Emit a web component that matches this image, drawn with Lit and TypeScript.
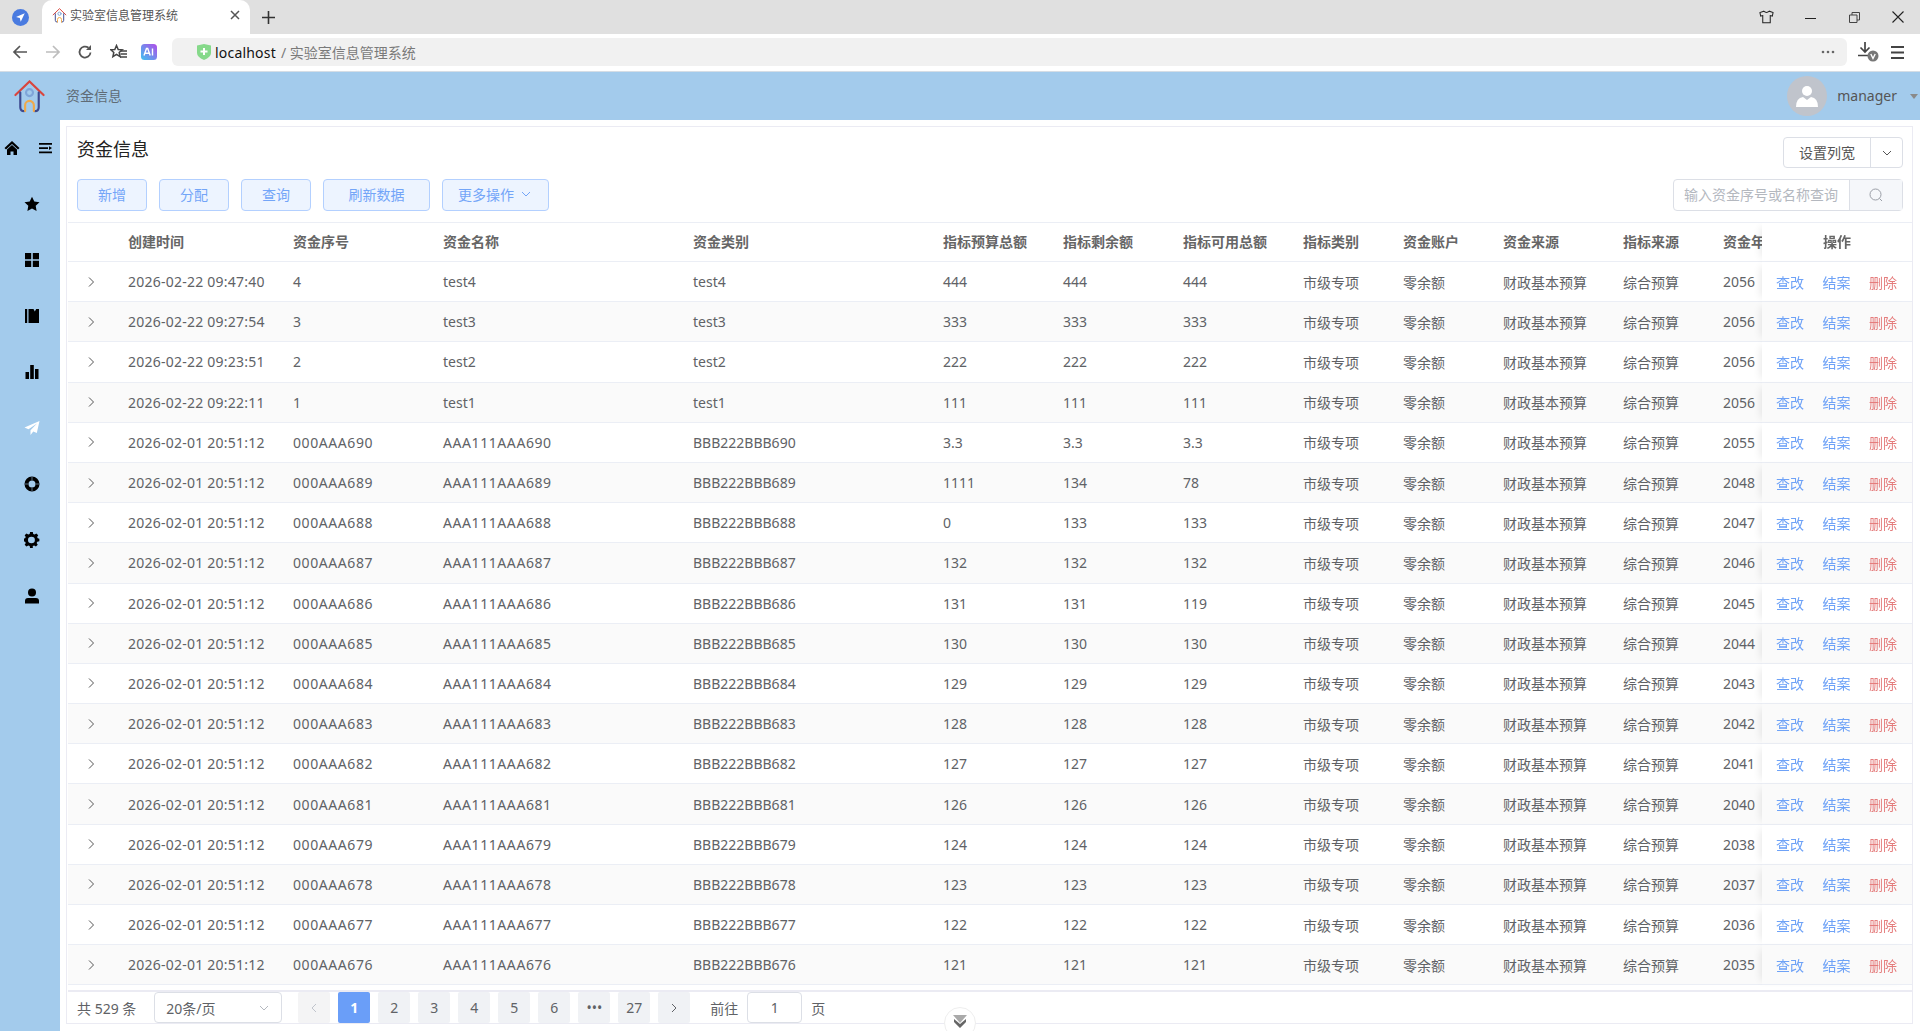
import { LitElement, html, css, svg } from 'lit';
import { customElement } from 'lit/decorators.js';

const FONT = css`"Noto Sans", "Noto Sans CJK SC", sans-serif`;

const logo = (size: number) => html`
  <svg width=${size} height=${size} viewBox="0 0 32 34" fill="none" stroke-linecap="round">
    <path d="M1.5 15.5 16 1.5l14.5 14" stroke="#d9453d" stroke-width="2.2" />
    <circle cx="16" cy="13" r="3.6" stroke="#7fa5d8" stroke-width="2.2" />
    <path d="M6.5 13v15q0 4 4 4M25.5 13v15q0 4-4 4" stroke="#3d4a8f" stroke-width="2.2" />
    <path d="M11.5 32v-6a4.5 4.5 0 0 1 9 0v6" stroke="#f0a94a" stroke-width="2.2" />
  </svg>
`;

@customElement('browser-bar')
class BrowserBar extends LitElement {
  static styles = css`
    :host {
      display: block;
      font-family: ${FONT};
    }
    .tabs {
      height: 34px;
      background: #e0e0e0;
      display: flex;
      align-items: center;
    }
    .pin {
      width: 42px;
      display: flex;
      justify-content: center;
      padding-right: 2px;
      box-sizing: border-box;
    }
    .tab {
      width: 208px;
      height: 34px;
      background: #fff;
      border-radius: 10px 10px 0 0;
      display: flex;
      align-items: center;
      padding: 0 10px 4px;
      box-sizing: border-box;
      gap: 3px;
      font-size: 12px;
      color: #555;
    }
    .tab span {
      flex: 1;
    }
    .plus {
      margin-left: 12px;
    }
    .win {
      margin-left: auto;
      display: flex;
      align-items: center;
    }
    .win span {
      width: 44px;
      display: flex;
      justify-content: center;
    }
    .nav {
      height: 38px;
      background: #fff;
      border-bottom: 1px solid #d5dde5;
      box-sizing: border-box;
      display: flex;
      align-items: center;
      padding: 0 0 1px 12px;
    }
    .nav .ico {
      display: flex;
      margin-right: 15px;
    }
    .addr {
      width: 1675px;
      height: 28px;
      margin-left: 8px;
      background: #f1f1f1;
      border-radius: 6px;
      display: flex;
      align-items: center;
      padding-left: 25px;
      box-sizing: border-box;
      font-size: 14px;
      color: #111;
    }
    .addr .shield {
      margin-right: 4px;
      display: flex;
    }
    .addr .host {
      letter-spacing: 0.2px;
    }
    .addr .rest {
      color: #7a7a7a;
      margin-left: 5px;
    }
    .addr .dots {
      margin-left: auto;
      margin-right: 12px;
      display: flex;
    }
    .tail {
      display: flex;
      align-items: center;
      gap: 12px;
      margin-left: 11px;
    }
  `;

  render() {
    return html`
      <div class="tabs">
        <div class="pin">
          <svg width="17" height="17" viewBox="0 0 16 16">
            <circle cx="8" cy="8" r="8" fill="#4a7be0" />
            <path d="M12 4 3.8 7.6l3.5.9.9 3.5z" fill="#fff" />
          </svg>
        </div>
        <div class="tab">
          ${logo(15)}
          <span>实验室信息管理系统</span>
          <svg width="10" height="10" viewBox="0 0 10 10" stroke="#555" stroke-width="1.5">
            <path d="M1 1l8 8M9 1l-8 8" />
          </svg>
        </div>
        <svg class="plus" width="13" height="13" viewBox="0 0 13 13" stroke="#333" stroke-width="1.6">
          <path d="M6.5 0v13M0 6.500h13" />
        </svg>
        <div class="win">
          <span>
            <svg width="15" height="14" viewBox="0 0 16 14" fill="none" stroke="#222" stroke-width="1.1">
              <path d="M5 .8 1 2.200 1.800 6 4 5.500V13.200h8V5.500l2.200.5L15 2.200 11 .8Q8 3.500 5 .8z" />
            </svg>
          </span>
          <span><svg width="11" height="11" viewBox="0 0 11 11" stroke="#222" stroke-width="1"><path d="M0 6.500h11" /></svg></span>
          <span>
            <svg width="11" height="11" viewBox="0 0 11 11" fill="none" stroke="#444" stroke-width="1">
              <path d="M.5 3h7.500v7.500H.5zM3 3V.5h7.500V8H8" />
            </svg>
          </span>
          <span>
            <svg width="12" height="12" viewBox="0 0 12 12" stroke="#222" stroke-width="1.100"><path d="M.5.500l11 11M11.500.500l-11 11" /></svg>
          </span>
        </div>
      </div>
      <div class="nav">
        <span class="ico">
          <svg width="16" height="16" viewBox="0 0 16 16" fill="none" stroke="#555" stroke-width="1.700"><path d="M15 8H2M8 2 2 8l6 6" /></svg>
        </span>
        <span class="ico" style="margin-left:2px">
          <svg width="16" height="16" viewBox="0 0 16 16" fill="none" stroke="#bdbdbd" stroke-width="1.700"><path d="M1 8h13M8 2l6 6-6 6" /></svg>
        </span>
        <span class="ico" style="margin-left:1px">
          <svg width="16" height="16" viewBox="0 0 16 16" fill="none" stroke="#555" stroke-width="1.800">
            <path d="M13.500 8.500A5.500 5.500 0 1 1 11.500 3.800" /><path d="M14 1v5h-5z" fill="#555" stroke="none" />
          </svg>
        </span>
        <span class="ico" style="margin-left:2px;margin-right:14px">
          <svg width="17" height="16" viewBox="0 0 17 16">
            <path d="M6.500 1.500 8.200 5.500l4 .3-3 2.700.9 4.200-3.600-2.300L2.900 12.700l.9-4.200-3-2.700 4-.3z" fill="none" stroke="#444" stroke-width="1.500" />
            <path d="M11 7h6M10.500 10h6.500M10 13h7" stroke="#444" stroke-width="1.400" />
          </svg>
        </span>
        <span class="ico" style="margin-right:7px">
          <svg width="16" height="16" viewBox="0 0 16 16">
            <defs>
              <linearGradient id="ai" x1="0" y1="1" x2="1" y2="0">
                <stop offset="0" stop-color="#3fc3f0" /><stop offset="1" stop-color="#b14be8" />
              </linearGradient>
            </defs>
            <rect width="16" height="16" rx="3.500" fill="url(#ai)" />
            <path d="M3 11.500 5.500 4.500h1.200l2.500 7M4 9.300h4M11.500 4.500v7" fill="none" stroke="#fff" stroke-width="1.400" />
          </svg>
        </span>
        <div class="addr">
          <span class="shield">
            <svg width="14" height="16" viewBox="0 0 14 16">
              <path d="M0 1.500 7 0l7 1.500V9q0 4-7 7-7-3-7-7z" fill="#86d98a" />
              <path d="M7 4v7M3.500 7.500h7" stroke="#fff" stroke-width="2" />
            </svg>
          </span>
          <span class="host">localhost</span>
          <span class="rest">/ 实验室信息管理系统</span>
          <span class="dots">
            <svg width="14" height="4" viewBox="0 0 14 4" fill="#666">
              <circle cx="2" cy="2" r="1.300" /><circle cx="7" cy="2" r="1.300" /><circle cx="12" cy="2" r="1.300" />
            </svg>
          </span>
        </div>
        <div class="tail">
          <svg width="21" height="20" viewBox="0 0 21 20">
            <path d="M7 0v9M2.500 5.500 7 10l4.500-4.500M0 13.500h12" fill="none" stroke="#444" stroke-width="1.700" />
            <circle cx="15" cy="14" r="5.500" fill="#777" />
            <path d="M12.800 12 15 16.500 17.200 12" fill="none" stroke="#fff" stroke-width="1.400" />
          </svg>
          <svg width="13" height="13" viewBox="0 0 13 13" stroke="#444" stroke-width="1.800">
            <path d="M0 1h13M0 6.500h13M0 12h13" />
          </svg>
        </div>
      </div>
    `;
  }
}

type Row = {
  time: string;
  no: string;
  name: string;
  kind: string;
  total: string;
  left: string;
  free: string;
  year: string;
};

const seed = (t: string, n: number, y: string): Row => ({
  time: `2026-02-22 ${t}`,
  no: `${n}`,
  name: `test${n}`,
  kind: `test${n}`,
  total: `${n}${n}${n}`,
  left: `${n}${n}${n}`,
  free: `${n}${n}${n}`,
  year: y,
});

const bulk = (id: number, total: string, left: string, free: string, y: string): Row => ({
  time: '2026-02-01 20:51:12',
  no: `000AAA${id}`,
  name: `AAA111AAA${id}`,
  kind: `BBB222BBB${id}`,
  total,
  left,
  free,
  year: y,
});

const ROWS: Row[] = [
  seed('09:47:40', 4, '2056'),
  seed('09:27:54', 3, '2056'),
  seed('09:23:51', 2, '2056'),
  seed('09:22:11', 1, '2056'),
  bulk(690, '3.3', '3.3', '3.3', '2055'),
  bulk(689, '1111', '134', '78', '2048'),
  bulk(688, '0', '133', '133', '2047'),
  bulk(687, '132', '132', '132', '2046'),
  bulk(686, '131', '131', '119', '2045'),
  bulk(685, '130', '130', '130', '2044'),
  bulk(684, '129', '129', '129', '2043'),
  bulk(683, '128', '128', '128', '2042'),
  bulk(682, '127', '127', '127', '2041'),
  bulk(681, '126', '126', '126', '2040'),
  bulk(679, '124', '124', '124', '2038'),
  bulk(678, '123', '123', '123', '2037'),
  bulk(677, '122', '122', '122', '2036'),
  bulk(676, '121', '121', '121', '2035'),
];

const COLS = [50, 165, 150, 250, 250, 120, 120, 120, 100, 100, 120, 100, 120];
const HEADS = ['', '创建时间', '资金序号', '资金名称', '资金类别', '指标预算总额', '指标剩余额', '指标可用总额', '指标类别', '资金账户', '资金来源', '指标来源', '资金年度'];

const chevron = svg`<path d="M3 5l4 4 4-4" fill="none" stroke="currentColor" stroke-width="1" />`;

const SIDE_ICONS = [
  svg`<path d="M8 1 .5 8 2 9.500l6-5.600 6 5.600L15.500 8zM3 9.500 8 5l5 4.500V15H9.500v-3.500h-3V15H3z" />`,
  svg`<path d="M8 .8 10.300 5.500l5.200.7-3.800 3.600.9 5.200L8 12.500 3.400 15l.9-5.200L.5 6.200l5.200-.7z" />`,
  svg`<path d="M1 1h6.200v6.200H1zM8.800 1H15v6.200H8.800zM1 8.800h6.200V15H1zM8.800 8.800H15V15H8.800z" />`,
  svg`<path d="M1 1h2.200v14H1zM4.500 1h5l1.300 2.500L12.200 1H15v14H4.500z" />`,
  svg`<path d="M1.500 8h3.500v7H1.500zM6.200 1h3.600v14H6.200zM11 5h3.500v10H11z" />`,
  svg`<path d="M15.500 1 .5 7.500l4 1.800L13 3.500 6.500 10.300V15l2.800-3.500 3.500 1.500z" fill="#fff" />`,
  svg`<path fill-rule="evenodd" d="M8 .5a7.500 7.500 0 1 0 0 15 7.500 7.500 0 0 0 0-15zM8 4.500a3.500 3.500 0 1 1 0 7 3.500 3.500 0 0 1 0-7z" /><path d="M8 .5v4M8 11.500v4M.5 8h4M11.500 8h4" stroke="#5d7286" stroke-width="1" />`,
  svg`<path fill-rule="evenodd" d="M6.500 0h3l.4 2.200 1.500.7 1.900-1.200 2 2-1.200 1.900.7 1.500L16.500 7.500v3l-2.200.4-.7 1.500 1.200 1.900-2 2-1.900-1.200-1.500.7L9.500 18h-3l-.4-2.200-1.500-.7-1.900 1.200-2-2 1.200-1.900-.7-1.500-2.200-.4v-3l2.200-.4.7-1.500L.7 3.700l2-2 1.900 1.200 1.500-.7zM8 5.300a3.700 3.700 0 1 0 0 7.400 3.700 3.700 0 0 0 0-7.400z" transform="translate(0 0) scale(.93 .89)" />`,
  svg`<circle cx="8" cy="4.500" r="4" /><path d="M1 15.500V13q0-3 3-3h8q3 0 3 3v2.500z" />`,
];

@customElement('app-root')
class AppRoot extends LitElement {
  static styles = css`
    :host {
      display: flex;
      flex-direction: column;
      height: 1031px;
      overflow: hidden;
      font-family: ${FONT};
      font-size: 14px;
      color: #606266;
      background: #fff;
    }
    .top {
      height: 48px;
      flex: none;
      background: #a3cbec;
      display: flex;
      align-items: center;
      padding-left: 13px;
    }
    .top .crumb {
      margin: 0 0 2px 20px;
      color: #5f6b76;
    }
    .user {
      margin-left: auto;
      display: flex;
      align-items: center;
      color: #555;
      padding-right: 2px;
    }
    .user .who {
      margin-bottom: 2px;
    }
    .avatar {
      width: 40px;
      height: 40px;
      border-radius: 50%;
      background: #c0c4cc;
      display: flex;
      align-items: center;
      justify-content: center;
      margin-right: 10px;
    }
    .caret {
      width: 0;
      height: 0;
      margin-left: 13px;
      border-left: 4.500px solid transparent;
      border-right: 4.500px solid transparent;
      border-top: 5px solid #8a8a8a;
    }
    .body {
      flex: 1;
      display: flex;
      min-height: 0;
    }
    .side {
      width: 60px;
      flex: none;
      background: #a3cbec;
      display: flex;
      flex-direction: column;
      padding-top: 20px;
      box-sizing: border-box;
    }
    .side .first {
      height: 16px;
      display: flex;
      justify-content: space-between;
      padding: 0 7px 0 4px;
      margin-bottom: 40px;
    }
    .side .item {
      height: 16px;
      margin-bottom: 40px;
      display: flex;
      justify-content: center;
      padding-left: 4px;
    }
    .main {
      flex: 1;
      min-width: 0;
      padding: 6px 7px 0 6px;
      box-sizing: border-box;
      position: relative;
    }
    .card {
      height: 898px;
      border: 1px solid #ebebf3;
      box-sizing: border-box;
      display: flex;
      flex-direction: column;
      padding-top: 10px;
    }
    .head {
      display: flex;
      justify-content: space-between;
      align-items: flex-start;
      height: 31px;
      padding: 0 9px 0 10px;
      flex: none;
    }
    .head h1 {
      margin: 0;
      font-size: 18px;
      line-height: 24px;
      font-weight: 400;
      color: #222;
    }
    .split {
      display: flex;
      height: 31px;
      border: 1px solid #dcdfe6;
      border-radius: 4px;
      box-sizing: border-box;
      align-items: center;
      color: #555;
    }
    .split .label {
      width: 86px;
      text-align: center;
      margin-bottom: 2px;
    }
    .split .more {
      width: 31px;
      height: 100%;
      border-left: 1px solid #dcdfe6;
      display: flex;
      align-items: center;
      justify-content: center;
    }
    .tools {
      display: flex;
      align-items: center;
      height: 32px;
      margin-top: 11px;
      padding: 0 9px 0 10px;
      flex: none;
    }
    .btn {
      height: 32px;
      border: 1px solid #b3d0ff;
      border-radius: 4px;
      background: #edf4ff;
      color: #73a5f8;
      padding: 0 20px 2px;
      box-sizing: border-box;
      display: flex;
      align-items: center;
      margin-right: 12px;
      font-size: 14px;
      gap: 5px;
    }
    .btn.wide {
      padding: 0 24.500px 2px;
    }
    .btn.drop {
      padding: 0 15px 2px;
    }
    .search {
      margin-left: auto;
      width: 230px;
      height: 32px;
      border: 1px solid #dcdfe6;
      border-radius: 4px;
      box-sizing: border-box;
      display: flex;
      color: #b4b8bf;
    }
    .search .ph {
      flex: 1;
      display: flex;
      align-items: center;
      padding: 0 0 2px 10px;
      white-space: nowrap;
      overflow: hidden;
    }
    .search .go {
      width: 52px;
      flex: none;
      background: #f5f7fa;
      border-left: 1px solid #dcdfe6;
      display: flex;
      align-items: center;
      justify-content: center;
    }
    .grid {
      margin: 11px 0 0 1px;
      height: 770px;
      flex: none;
      overflow: hidden;
      border-top: 1px solid #ebeef5;
      border-bottom: 2px solid #ebebf3;
      box-sizing: border-box;
    }
    table {
      border-collapse: separate;
      border-spacing: 0;
      table-layout: fixed;
      width: 1845px;
    }
    th,
    td {
      padding: 0 10px;
      text-align: left;
      white-space: nowrap;
      overflow: hidden;
      border-bottom: 1px solid #ebeef5;
      box-sizing: border-box;
    }
    th {
      height: 39px;
      padding-bottom: 2px;
      font-size: 14px;
      font-weight: 700;
      color: #666;
      background: #fff;
    }
    td {
      height: 40.200px;
    }
    td.time {
      letter-spacing: 0.24px;
    }
    td.aaa {
      letter-spacing: 0.58px;
    }
    tr.alt td {
      background: #fafafa;
    }
    .expand {
      padding: 0 0 0 17px;
    }
    .expand svg {
      display: block;
    }
    .fix {
      position: sticky;
      right: 0;
      text-align: center;
      background: #fff;
      box-shadow: -6px 0 8px -5px rgba(0, 0, 0, 0.1);
      padding: 0 0 0 14px;
    }
    th.fix {
      padding: 0 0 2px;
    }
    td.fix {
      background: #fff;
    }
    .ops {
      display: flex;
      gap: 18.500px;
    }
    .ops .view {
      color: #6ea2f7;
    }
    .ops .del {
      color: #e57c7c;
    }
    .pager {
      display: flex;
      align-items: center;
      height: 31px;
      padding-left: 10px;
      flex: none;
      font-size: 14px;
    }
    .select {
      width: 128px;
      height: 31px;
      margin-left: 18px;
      margin-right: 16px;
      border: 1px solid #dcdfe6;
      border-radius: 4px;
      box-sizing: border-box;
      display: flex;
      align-items: center;
      justify-content: space-between;
      padding: 0 10px 0 11px;
      color: #606266;
    }
    .page {
      width: 32px;
      height: 31px;
      margin-right: 8px;
      background: #f0f2f5;
      border-radius: 2px;
      display: flex;
      align-items: center;
      justify-content: center;
      color: #606266;
    }
    .page.on {
      background: #6a9ef8;
      color: #fff;
      font-weight: 700;
    }
    .page.off {
      background: #f4f4f5;
      color: #c0c4cc;
    }
    .jump {
      margin-left: 12px;
      display: flex;
      align-items: center;
      gap: 9px;
    }
    .jump .box {
      width: 55px;
      height: 31px;
      border: 1px solid #dcdfe6;
      border-radius: 4px;
      box-sizing: border-box;
      display: flex;
      align-items: center;
      justify-content: center;
    }
    .fold {
      position: absolute;
      left: 884px;
      top: 887px;
      width: 32px;
      height: 32px;
      border-radius: 50%;
      background: #fff;
      border: 1px solid #eeeeee;
      box-sizing: border-box;
      display: flex;
      justify-content: center;
      padding-top: 7px;
    }
  `;

  renderRow(r: Row, i: number) {
    const cells = [r.time, r.no, r.name, r.kind, r.total, r.left, r.free, '市级专项', '零余额', '财政基本预算', '综合预算', r.year];
    return html`
      <tr class=${i % 2 ? 'alt' : ''}>
        <td class="expand">
          <svg width="12" height="12" viewBox="0 0 12 12" fill="none" stroke="#555" stroke-width="1"><path d="M4 1.500 8.500 6 4 10.500" /></svg>
        </td>
        ${cells.map((c, k) => html`<td class=${k === 0 ? 'time' : c.includes('AAA') ? 'aaa' : ''}>${c}</td>`)}
        <td class="fix">
          <div class="ops">
            <span class="view">查改</span><span class="view">结案</span><span class="del">删除</span>
          </div>
        </td>
      </tr>
    `;
  }

  render() {
    const pages = ['1', '2', '3', '4', '5', '6', '•••', '27'];
    return html`
      <browser-bar></browser-bar>
      <div class="top">
        ${logo(33)}
        <span class="crumb">资金信息</span>
        <div class="user">
          <div class="avatar">
            <svg width="24" height="24" viewBox="0 0 24 24" fill="#fff">
              <circle cx="12" cy="7" r="5" /><path d="M1 23q0-9 7-10l4 3 4-3q7 1 7 10z" />
            </svg>
          </div>
          <span class="who">manager</span>
          <span class="caret"></span>
        </div>
      </div>
      <div class="body">
        <nav class="side">
          <div class="first">
            <svg width="16" height="16" viewBox="0 0 16 16" fill="#000">${SIDE_ICONS[0]}</svg>
            <svg width="16" height="16" viewBox="0 0 16 16" fill="#000"><path d="M2 3h13v1.800H2zM2 7.200h9v1.800H2zM12 6.300l3 1.800-3 1.800zM2 11.500h13v1.800H2z" /></svg>
          </div>
          ${SIDE_ICONS.slice(1).map(
            (p) => html`<div class="item"><svg width="16" height="16" viewBox="0 0 16 16" fill="#000">${p}</svg></div>`
          )}
        </nav>
        <main class="main">
          <section class="card">
            <div class="head">
              <h1>资金信息</h1>
              <div class="split">
                <span class="label">设置列宽</span>
                <span class="more"><svg width="14" height="14" viewBox="0 0 14 14">${chevron}</svg></span>
              </div>
            </div>
            <div class="tools">
              <span class="btn">新增</span>
              <span class="btn">分配</span>
              <span class="btn">查询</span>
              <span class="btn wide">刷新数据</span>
              <span class="btn drop">更多操作 <svg width="14" height="14" viewBox="0 0 14 14">${chevron}</svg></span>
              <div class="search">
                <span class="ph">输入资金序号或名称查询</span>
                <span class="go">
                  <svg width="16" height="16" viewBox="0 0 16 16" fill="none" stroke="#9a9ea6" stroke-width="1">
                    <circle cx="7.500" cy="7.500" r="5.500" /><path d="m11.500 11.500 2.500 2.500" />
                  </svg>
                </span>
              </div>
            </div>
            <div class="grid">
              <table>
                <colgroup>
                  ${COLS.map((w) => html`<col style="width:${w}px" />`)}
                  <col style="width:150px" />
                </colgroup>
                <thead>
                  <tr>
                    ${HEADS.map((h) => html`<th>${h}</th>`)}
                    <th class="fix">操作</th>
                  </tr>
                </thead>
                <tbody>
                  ${ROWS.map((r, i) => this.renderRow(r, i))}
                </tbody>
              </table>
            </div>
            <div class="pager">
              <span>共 529 条</span>
              <div class="select">
                <span>20条/页</span>
                <svg width="14" height="14" viewBox="0 0 14 14" style="color:#b4b8bf">${chevron}</svg>
              </div>
              <span class="page off"><svg width="12" height="12" viewBox="0 0 12 12" fill="none" stroke="currentColor"><path d="M8 2 4 6l4 4" /></svg></span>
              ${pages.map((p, i) => html`<span class="page ${i === 0 ? 'on' : ''}">${p}</span>`)}
              <span class="page"><svg width="12" height="12" viewBox="0 0 12 12" fill="none" stroke="currentColor"><path d="m4 2 4 4-4 4" /></svg></span>
              <div class="jump">
                <span>前往</span>
                <span class="box">1</span>
                <span>页</span>
              </div>
            </div>
          </section>
          <div class="fold">
            <svg width="14" height="14" viewBox="0 0 14 14"><path d="M0 0h14L7 8z" fill="#aaa" /><path d="M1 4l6 5 6-5 0 3-6 6-6-6z" fill="#666" /></svg>
          </div>
        </main>
      </div>
    `;
  }
}
